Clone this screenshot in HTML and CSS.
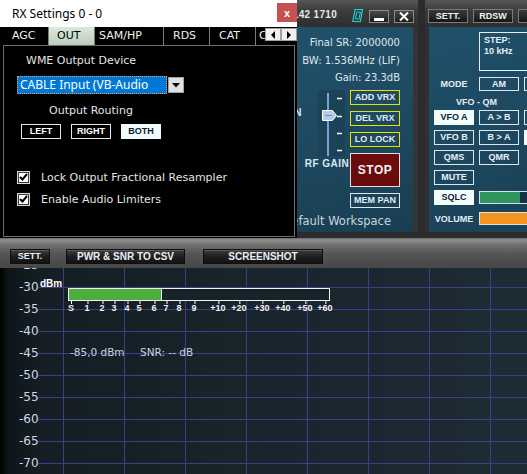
FILE: index.html
```html
<!DOCTYPE html>
<html lang="en">
<head>
  <meta charset="UTF-8" />
  <meta name="viewport" content="width=device-width, initial-scale=1.0"/>
  <title>RX Settings 0 - 0</title>
  <link rel="stylesheet" href="styles.css">
</head>
<body>
  <div class="app">

    <div class="top">
      <!-- receiver panel -->
      <section class="rx-panel">
        <div class="bar">
          <span class="freq">7.074.142 1710</span>
          <span class="seg">
            <svg width="14" height="15" viewBox="0 0 14 15">
              <path d="M5 1.5h7.5l-2.2 12H2.8z" fill="none" stroke="#1ed4d4" stroke-width="1.2"/>
              <path d="M6.8 4h3.6l-1.3 7H5.5z" fill="none" stroke="#1ed4d4" stroke-width="1"/>
            </svg>
          </span>
          <button class="win-btn"><span class="min-bar"></span></button>
          <button class="win-btn">
            <svg width="10" height="9" viewBox="0 0 10 9"><path d="M1 0.5l8 8M9 0.5l-8 8" stroke="#fff" stroke-width="2"/></svg>
          </button>
        </div>
        <div class="rx-body">
          <div class="info">
            <div>Final SR: 2000000</div>
            <div>BW: 1.536MHz (LIF)</div>
            <div>Gain: 23.3dB</div>
          </div>
          <div class="controls">
            <div class="side-label">AF GAIN</div>
            <div class="slider-col">
              <svg width="46" height="66" viewBox="0 0 46 66">
                <rect x="14" y="0" width="27" height="66" fill="#1b4357"/>
                <rect x="23" y="3" width="2" height="63" fill="#7d9fcf"/>
                <path d="M33 8.5h5M33 26.5h5M33 43.5h5M33 60.5h5" stroke="#fff" stroke-width="1.5"/>
                <path d="M18.5 20.5h10l4 5-4 5h-10z" fill="#b8cce6" stroke="#fff"/>
                <path d="M21 25.5h7" stroke="#6a8cbc"/>
              </svg>
              <div class="slider-label">RF GAIN</div>
            </div>
            <div class="btn-col">
              <button class="vrx">ADD VRX</button>
              <button class="vrx">DEL VRX</button>
              <button class="vrx">LO LOCK</button>
              <button class="stop">STOP</button>
              <button class="plain">MEM PAN</button>
            </div>
          </div>
          <div class="workspace">Default Workspace</div>
        </div>
      </section>

      <!-- vfo panel -->
      <section class="vfo-panel">
        <div class="bar">
          <button class="bar-btn">SETT.</button>
          <button class="bar-btn">RDSW</button>
          <button class="bar-btn"></button>
        </div>
        <div class="vfo-body">
          <div class="vrow step-row">
            <div class="step">STEP:<br>10 kHz</div>
          </div>
          <div class="vrow mode-row">
            <div class="vlabel">MODE</div>
            <button class="vbtn short">AM</button>
            <button class="vbtn short"></button>
          </div>
          <div class="qm-label">VFO - QM</div>
          <div class="vrow first">
            <button class="vbtn on">VFO A</button>
            <button class="vbtn">A &gt; B</button>
            <button class="vbtn"></button>
          </div>
          <div class="vrow">
            <button class="vbtn">VFO B</button>
            <button class="vbtn">B &gt; A</button>
            <button class="vbtn on"></button>
          </div>
          <div class="vrow">
            <button class="vbtn">QMS</button>
            <button class="vbtn">QMR</button>
          </div>
          <div class="vrow">
            <button class="vbtn">MUTE</button>
          </div>
          <div class="vrow">
            <button class="vbtn on">SQLC</button>
            <div class="level sqlc"><div class="level-fill" style="width: 40px;"></div></div>
          </div>
          <div class="vrow volume-row">
            <div class="vlabel">VOLUME</div>
            <div class="level volume"></div>
          </div>
        </div>
      </section>
    </div>

    <div class="toolbar">
      <button class="tool-btn sett">SETT.</button>
      <button class="tool-btn csv">PWR &amp; SNR TO CSV</button>
      <button class="tool-btn shot">SCREENSHOT</button>
    </div>

    <div class="graph">
      <div class="axis">
        <div>-25</div>
        <div>-30</div>
        <div>-35</div>
        <div>-40</div>
        <div>-45</div>
        <div>-50</div>
        <div>-55</div>
        <div>-60</div>
        <div>-65</div>
        <div>-70</div>
      </div>
      <div class="plot">
        <span class="unit">dBm</span>
        <div class="smeter"><div class="smeter-fill" style="width: 93px;"></div></div>
        <div class="scale">
          <span style="left: 33px;">S</span>
          <span style="left: 49px;">1</span>
          <span style="left: 64px;">2</span>
          <span style="left: 76px;">3</span>
          <span style="left: 89px;">4</span>
          <span style="left: 101px;">5</span>
          <span style="left: 116px;">6</span>
          <span style="left: 128px;">7</span>
          <span style="left: 141px;">8</span>
          <span style="left: 156px;">9</span>
          <span style="left: 180px;">+10</span>
          <span style="left: 201px;">+20</span>
          <span style="left: 224px;">+30</span>
          <span style="left: 245px;">+40</span>
          <span style="left: 267px;">+50</span>
          <span style="left: 287px;">+60</span>
        </div>
        <span class="readout power">-85,0 dBm</span>
        <span class="readout snr">SNR: -- dB</span>
      </div>
    </div>

    <!-- RX settings dialog -->
    <div class="dialog">
      <div class="dlg-title">
        RX Settings 0 - 0
        <button class="dlg-close">x</button>
      </div>
      <div class="tabs">
        <div class="tab">AGC</div>
        <div class="tab active">OUT</div>
        <div class="tab wide">SAM/HP</div>
        <div class="tab">RDS</div>
        <div class="tab">CAT</div>
        <div class="tab cut">C</div>
        <div class="tab-scroll">
          <button class="arrow">
            <svg width="6" height="8" viewBox="0 0 6 8"><path d="M5 0v8L1 4z" fill="#000"/></svg>
          </button>
          <button class="arrow">
            <svg width="6" height="8" viewBox="0 0 6 8"><path d="M1 0v8l4-4z" fill="#000"/></svg>
          </button>
        </div>
      </div>
      <div class="dlg-body">
        <div class="dev-label">WME Output Device</div>
        <div class="combo">
          <div class="combo-text">CABLE Input (VB-Audio</div>
          <div class="combo-arrow">
            <svg width="8" height="5" viewBox="0 0 8 5"><path d="M0 0h8L4 4.5z" fill="#000"/></svg>
          </div>
        </div>
        <div class="routing-label">Output Routing</div>
        <div class="route-row">
          <button class="route-btn">LEFT</button>
          <button class="route-btn">RIGHT</button>
          <button class="route-btn on">BOTH</button>
        </div>
        <div class="check first">
          <span class="box">
            <svg width="9" height="8" viewBox="0 0 9 8"><path d="M1 4l2.5 2.5L8 1" fill="none" stroke="#000" stroke-width="2"/></svg>
          </span>
          Lock Output Fractional Resampler
        </div>
        <div class="check">
          <span class="box">
            <svg width="9" height="8" viewBox="0 0 9 8"><path d="M1 4l2.5 2.5L8 1" fill="none" stroke="#000" stroke-width="2"/></svg>
          </span>
          Enable Audio Limiters
        </div>
      </div>
    </div>

  </div>
</body>
</html>
```

FILE: styles.css
```css
* {
  box-sizing: border-box;
}

body {
  margin: 0;
  background: #2b2b2b;
  font-family: "DejaVu Sans", sans-serif;
  color: #e0e8ef;
}

button {
  margin: 0;
  padding: 0;
  border: none;
  background: none;
  font: inherit;
  color: inherit;
}

.app {
  position: relative;
  width: 527px;
  height: 474px;
  overflow: hidden;
}

/* top panels */
.top {
  display: flex;
  height: 238px;
  background: #2b2b2b;
}

.bar {
  display: flex;
  align-items: flex-end;
  height: 27px;
  padding-bottom: 4px;
  background: linear-gradient(#555, #3c3c3c 40%, #2e2e2e);
}

.rx-panel {
  flex: none;
  width: 418px;
  height: 232px;
}

.rx-panel .bar {
  justify-content: flex-end;
  gap: 5px;
  padding-right: 4px;
}

.freq {
  align-self: flex-start;
  margin: 9px 8px 0 0;
  font: bold 10px "Liberation Sans", Arial, sans-serif;
  line-height: 12px;
  letter-spacing: 0.3px;
  color: #e8e8e8;
  white-space: nowrap;
}

.seg {
  display: flex;
  align-self: flex-start;
  margin-top: 8px;
}

.win-btn {
  display: flex;
  align-items: center;
  justify-content: center;
  width: 20px;
  height: 13px;
  border: 1px solid #8a8a8a;
  background: linear-gradient(#4a4a4a, #1c1c1c);
}

.min-bar {
  align-self: flex-end;
  width: 10px;
  height: 3px;
  margin-bottom: 1px;
  background: #fff;
}

.rx-body {
  height: 205px;
  padding: 7px 13px 0 0;
  border-right: 5px solid #343434;
  background: linear-gradient(165deg, #23566f, #1e4a61 60%, #193e52);
}

.info {
  text-align: right;
  font-size: 10px;
  line-height: 17.5px;
  color: #dfe7ef;
}

.controls {
  display: flex;
  justify-content: flex-end;
  align-items: flex-start;
  margin-top: 3.5px;
}

.side-label,
.slider-label {
  font: bold 10px "Liberation Sans", Arial, sans-serif;
  letter-spacing: 0.5px;
  line-height: 10px;
  color: #dfe7ef;
  white-space: nowrap;
}

.side-label {
  margin: 18px 2px 0 0;
}

.slider-col {
  width: 46px;
}

.slider-col svg {
  display: block;
}

.slider-label {
  margin-top: 3px;
  text-align: center;
}

.btn-col {
  display: flex;
  flex-direction: column;
  gap: 6px;
  width: 50px;
}

.vrx,
.plain {
  height: 15px;
  font: bold 9px "Liberation Sans", Arial, sans-serif;
  line-height: 13px;
  color: #e2ecf4;
}

.vrx {
  border: 1px solid #e8e200;
}

.plain {
  border: 1px solid #dde6ee;
}

.stop {
  height: 34px;
  border: 1px solid #e0e0e0;
  background: #6a0c0c;
  font: bold 12px "Liberation Sans", Arial, sans-serif;
  letter-spacing: 0.5px;
  color: #f4f4f4;
}

.workspace {
  margin: 6px 9px 0 0;
  text-align: right;
  font-size: 11.5px;
  line-height: 14px;
  color: #c8d4df;
  white-space: nowrap;
}

/* vfo panel */
.vfo-panel {
  flex: none;
  width: 102px;
  height: 232px;
  margin-left: 7px;
  overflow: hidden;
}

.vfo-panel .bar {
  gap: 5px;
  padding-left: 3px;
}

.bar-btn {
  flex: none;
  width: 40px;
  height: 14px;
  border: 1px solid #7a7a7a;
  background: linear-gradient(#3a3a3a, #161616);
  font: bold 9px "Liberation Sans", Arial, sans-serif;
  line-height: 12px;
  color: #f0f0f0;
}

.vfo-body {
  height: 205px;
  padding: 5px 0 0 5px;
  border-left: 4px solid #303030;
  background: linear-gradient(160deg, #20506a, #1a4157);
  font: bold 9px "Liberation Sans", Arial, sans-serif;
  color: #e4edf5;
}

.vrow {
  display: flex;
  align-items: center;
  gap: 5px;
  margin-top: 5px;
}

.vrow.step-row {
  margin: 0 0 0 45px;
}

.step {
  flex: none;
  width: 60px;
  height: 39px;
  padding: 2px 0 0 4px;
  border: 1px solid #e6edf3;
  line-height: 11px;
}

.vrow.mode-row {
  margin-top: 6px;
}

.vrow.first {
  margin-top: 2px;
}

.vrow.volume-row {
  margin-top: 7px;
}

.vlabel {
  flex: none;
  width: 40px;
  text-align: center;
  white-space: nowrap;
}

.qm-label {
  width: 85px;
  margin-top: 5px;
  text-align: center;
  line-height: 12px;
}

.vbtn {
  flex: none;
  width: 40px;
  height: 15px;
  border: 1px solid #dfe7ee;
  line-height: 13px;
  text-align: center;
  color: #e8f0f6;
}

.vbtn.short {
  height: 14px;
  line-height: 12px;
}

.vbtn.on {
  border-color: #f2fcfc;
  background: #f2fcfc;
  color: #0d2236;
}

.level {
  flex: none;
  width: 60px;
  height: 13px;
  border: 1px solid #d8e2ea;
  background: #163446;
}

.level-fill {
  height: 100%;
  background: #2e965c;
}

.level.volume {
  background: #f39520;
}

/* bottom toolbar */
.toolbar {
  display: flex;
  height: 30px;
  padding: 11px 0 0 10px;
  background: linear-gradient(#6c6c6c, #909090 2px, #6e6e6e 7px, #555 16px, #474747);
}

.tool-btn {
  height: 15px;
  border: 1px solid #0e0e0e;
  background: linear-gradient(#3e3e3e, #1e1e1e 50%, #131313);
  box-shadow: inset 0 1px 0 #5a5a5a;
  font: bold 10px "Liberation Sans", Arial, sans-serif;
  line-height: 13px;
  color: #e8eef4;
}

.tool-btn.sett {
  width: 40px;
  margin-right: 16px;
  font-size: 9px;
}

.tool-btn.csv {
  width: 119px;
  margin-right: 18px;
}

.tool-btn.shot {
  width: 120px;
}

/* spectrum graph */
.graph {
  display: flex;
  height: 206px;
  overflow: hidden;
  background: linear-gradient(90deg, #000, #0e161a 8px, #141e24 40px, #1a262d 60%, #1e2c34);
}

.axis {
  flex: none;
  width: 38px;
  margin-top: -14px;
  padding-left: 19px;
  font-size: 12px;
  line-height: 22px;
  color: #cfd8e4;
  white-space: nowrap;
}

.plot {
  position: relative;
  flex: 1;
  background:
    linear-gradient(#3a3e8c 1px, transparent 1px) 0 19px / 100% 22px,
    linear-gradient(90deg, #3a3e8c 1px, transparent 1px) 25px 0 / 61px 100%;
}

.unit {
  position: absolute;
  left: 2px;
  top: 10px;
  font: bold 10px "Liberation Sans", Arial, sans-serif;
  line-height: 12px;
  color: #fff;
}

.smeter {
  position: absolute;
  left: 30px;
  top: 20px;
  width: 262px;
  height: 13px;
  border: 1px solid #f2f2f2;
  background: #16232a;
}

.smeter-fill {
  height: 100%;
  border-right: 1px solid #e8e8e8;
  background: #4cae3c;
}

.scale {
  position: absolute;
  left: 0;
  top: 33px;
  width: 100%;
  height: 14px;
}

.scale span {
  position: absolute;
  top: 0;
  padding-top: 2px;
  transform: translateX(-50%);
  font: bold 9px "Liberation Sans", Arial, sans-serif;
  line-height: 10px;
  color: #f4f4f4;
}

.scale span::before {
  content: "";
  position: absolute;
  left: 50%;
  top: 0;
  width: 1px;
  height: 3px;
  background: #fff;
}

.readout {
  position: absolute;
  top: 78px;
  font-size: 10.5px;
  line-height: 12px;
  color: #c8d4e0;
  white-space: nowrap;
}

.readout.power {
  left: 32px;
}

.readout.snr {
  left: 102px;
}

/* RX settings dialog */
.dialog {
  position: absolute;
  left: 0;
  top: 0;
  z-index: 10;
  width: 297px;
  height: 238px;
  background: #000;
}

.dlg-title {
  display: flex;
  align-items: center;
  height: 27px;
  padding-left: 12px;
  background: #fff;
  font: 12px "Noto Sans", sans-serif;
  color: #000;
}

.dlg-close {
  align-self: flex-start;
  width: 20px;
  height: 19px;
  margin: 3px 0 0 auto;
  background: #c75050;
  font: bold 11px "Liberation Sans", Arial, sans-serif;
  color: #fff;
}

.tabs {
  position: relative;
  display: flex;
  height: 18px;
  padding-left: 3px;
  overflow: hidden;
}

.tab {
  flex: none;
  width: 46px;
  padding-left: 9px;
  border-right: 1px solid #7c7c7c;
  font-size: 11px;
  line-height: 18px;
  color: #f0f0f0;
  white-space: nowrap;
  overflow: hidden;
}

.tab.wide {
  width: 69px;
  padding-left: 4px;
}

.tab.cut {
  width: 10px;
  padding-left: 3px;
  border-right: none;
}

.tab.active {
  padding-left: 8px;
  background: linear-gradient(#dbe8db, #bccdbc);
  color: #000;
}

.tab-scroll {
  position: absolute;
  right: 0;
  top: 1px;
  display: flex;
}

.arrow {
  display: flex;
  align-items: center;
  justify-content: center;
  width: 16px;
  height: 13px;
  border: 1px solid #a0a0a0;
  background: #f0f0f0;
}

.dlg-body {
  height: 192px;
  margin: 0 2px 0 3px;
  padding-top: 8px;
  border: 1px solid #6e6e6e;
  font-size: 11px;
  color: #e4e4e4;
}

.dev-label {
  margin-left: 22px;
  line-height: 14px;
}

.combo {
  display: flex;
  margin: 8px 0 0 13px;
}

.combo-text {
  width: 150px;
  height: 18px;
  padding-left: 2px;
  border: 1px dotted #f0a050;
  background: #0078d7;
  font: 12px "Noto Sans", sans-serif;
  line-height: 16px;
  color: #fff;
  white-space: nowrap;
}

.combo-arrow {
  display: flex;
  align-items: center;
  justify-content: center;
  width: 16px;
  height: 16px;
  margin: 1px 0 0 1px;
  border: 1px solid #a0a0a0;
  background: #e1e1e1;
}

.routing-label {
  margin: 10px 0 0 45px;
  line-height: 14px;
}

.route-row {
  display: flex;
  gap: 10px;
  margin: 6px 0 0 17px;
}

.route-btn {
  width: 40px;
  height: 15px;
  border: 1px solid #e8e8e8;
  font: bold 9px "Liberation Sans", Arial, sans-serif;
  line-height: 13px;
  color: #fff;
}

.route-btn.on {
  border-color: #f0fcfc;
  background: #f0fcfc;
  color: #0b1a33;
}

.check {
  display: flex;
  align-items: center;
  gap: 11px;
  height: 14px;
  margin: 8px 0 0 13px;
  white-space: nowrap;
}

.check.first {
  margin-top: 31px;
}

.box {
  display: flex;
  align-items: center;
  justify-content: center;
  width: 13px;
  height: 13px;
  border: 1px solid #d8d8d8;
  background: #fff;
  box-shadow: inset 0 0 0 1px #3c3c3c;
}
```
